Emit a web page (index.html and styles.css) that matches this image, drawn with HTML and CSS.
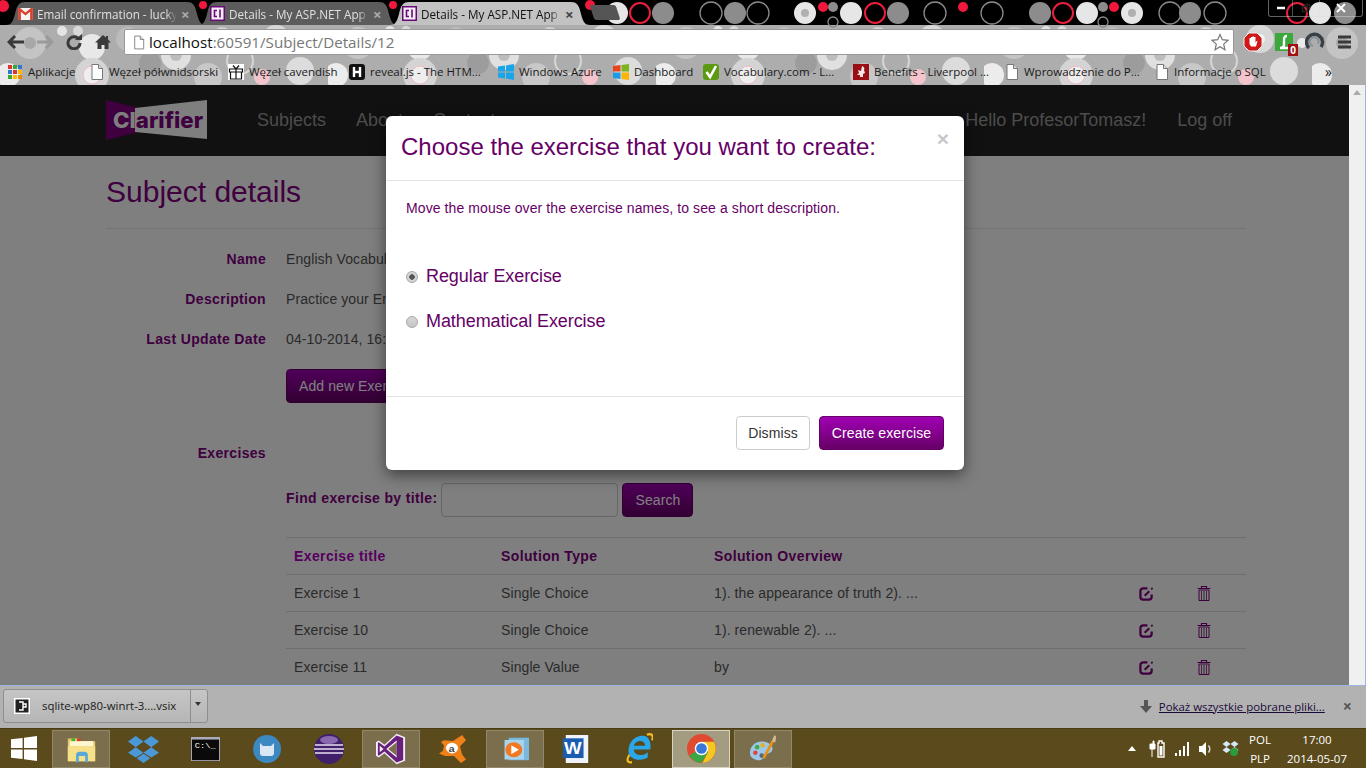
FILE: index.html
```html
<!DOCTYPE html>
<html lang="pl">
<head>
    <meta charset="UTF-8">
    <meta name="viewport" content="width=device-width, initial-scale=1.0">
    <title>Details - My ASP.NET Application</title>
    <link rel="stylesheet" href="styles.css">
</head>
<body>
    <!-- Shared icons -->
    <svg class="icon-defs" width="0" height="0">
        <symbol id="doc" viewBox="0 0 14 16">
            <path d="M2 .5h6.5L12.5 4.500v11h-10.500z" fill="#fff" stroke="#777"/>
            <path d="M8.500 .5v4h4" fill="#ddd" stroke="#777"/>
        </symbol>
        <symbol id="edit" viewBox="0 0 16 16">
            <path d="M9 2.500H4.500A3 3 0 0 0 1.500 5.500v6a3 3 0 0 0 3 3h6a3 3 0 0 0 3-3V9" fill="none" stroke="#800080" stroke-width="2.400"/>
            <path d="M6 10.500 11 5.500" stroke="#800080" stroke-width="2.200"/>
            <path d="M13 3.500l1.500-1.500" stroke="#800080" stroke-width="1.800"/>
        </symbol>
        <symbol id="trash" viewBox="0 0 14 16">
            <path d="M.5 3.500h13M4.500 3V1.500h5V3" fill="none" stroke="#800080" stroke-width="1.200"/>
            <path d="M2 5h10v10.500H2z" fill="none" stroke="#800080"/>
            <path d="M4.500 6v9M9.500 6v9" stroke="#a04070"/>
            <path d="M7 6v9" stroke="#6040a0"/>
        </symbol>
        <symbol id="gmail" viewBox="0 0 16 13">
            <path d="M0 0h16v13H0z" fill="#f4f4f4"/>
            <path d="M0 0v13h3V4l5 4 5-4v9h3V0h-2L8 5 2 0z" fill="#d9412f"/>
        </symbol>
        <symbol id="clarifier" viewBox="0 0 15 15">
            <path d="M0 0h15v15H0z" fill="#6a0a7a"/>
            <path d="M1.500 1.500h12v12h-12z" fill="#f2eef4"/>
            <path d="M7 4.500H4.500v6H7M10 3.500v8" fill="none" stroke="#6a0a7a" stroke-width="1.600"/>
        </symbol>
    </svg>

    <!-- Browser chrome -->
    <header class="browser-top">
        <svg class="theme" width="1366" height="85" aria-hidden="true">
            <defs>
                <pattern id="dots" x="0" y="25" width="328" height="60" patternUnits="userSpaceOnUse">
                    <circle cx="30" cy="18" r="16" fill="#c4c4c4"/>
                    <circle cx="30" cy="18" r="6" fill="#a8a8a8"/>
                    <circle cx="62" cy="6" r="5" fill="#e4e4e4"/>
                    <circle cx="78" cy="6" r="5" fill="#d8d8d8"/>
                    <circle cx="92" cy="22" r="13" fill="#e8e8e8"/>
                    <circle cx="92" cy="50" r="17" fill="#d4d4d4"/>
                    <circle cx="92" cy="50" r="9" fill="#eee" stroke="#f0b8c0"/>
                    <circle cx="128" cy="14" r="12" fill="#bcbcbc"/>
                    <circle cx="150" cy="38" r="11" fill="#9c9c9c"/>
                    <circle cx="150" cy="10" r="4" fill="#f2f2f2"/>
                    <circle cx="176" cy="30" r="15" fill="#e0e0e0"/>
                    <circle cx="176" cy="30" r="6" fill="#bdbdbd"/>
                    <circle cx="208" cy="52" r="14" fill="#c8c8c8"/>
                    <circle cx="222" cy="12" r="10" fill="#d2d2d2"/>
                    <circle cx="240" cy="36" r="13" fill="none" stroke="#d6d6d6" stroke-width="2"/>
                    <circle cx="262" cy="52" r="8" fill="#f4c4cc"/>
                    <circle cx="276" cy="14" r="14" fill="#d8d8d8"/>
                    <circle cx="276" cy="14" r="5" fill="#f2f2f2"/>
                    <circle cx="300" cy="46" r="14" fill="#dcdcdc"/>
                    <circle cx="318" cy="18" r="5" fill="#eaeaea"/>
                    <circle cx="8" cy="50" r="12" fill="#ececec"/>
                </pattern>
            </defs>
            <rect width="1366" height="25" fill="#000"/>
            <rect y="25" width="1366" height="60" fill="#adadad"/>
            <rect y="25" width="1366" height="60" fill="url(#dots)"/>
            <g fill="none" stroke="#8a8a8a" stroke-width="1.300">
                <circle cx="711" cy="13" r="11"/><circle cx="758" cy="13" r="11"/>
                <circle cx="833" cy="22" r="5"/><circle cx="935" cy="13" r="11"/>
                <circle cx="992" cy="13" r="11"/><circle cx="1103" cy="22" r="5"/>
                <circle cx="1170" cy="13" r="11"/><circle cx="1215" cy="13" r="11"/>
            </g>
            <g fill="#8c8c8c">
                <circle cx="663" cy="13" r="11"/><circle cx="735" cy="13" r="11"/>
                <circle cx="833" cy="7" r="5"/><circle cx="898" cy="13" r="11"/>
                <circle cx="1040" cy="13" r="11"/><circle cx="1103" cy="7" r="5"/>
                <circle cx="1190" cy="13" r="11"/><circle cx="1345" cy="13" r="11"/>
            </g>
            <g fill="#e6e6e6">
                <circle cx="617" cy="13" r="11"/><circle cx="805" cy="13" r="11"/>
                <circle cx="851" cy="13" r="11"/><circle cx="1087" cy="13" r="11"/>
                <circle cx="1132" cy="13" r="11"/><circle cx="1320" cy="13" r="11"/>
            </g>
            <g fill="#b0b0b0"><circle cx="805" cy="13" r="4"/><circle cx="1132" cy="13" r="4"/></g>
            <g fill="none" stroke="#e8203c" stroke-width="2">
                <circle cx="640" cy="13" r="10"/><circle cx="875" cy="13" r="10"/>
                <circle cx="1063" cy="13" r="10"/><circle cx="1297" cy="13" r="10"/>
            </g>
            <g fill="#f0183c">
                <circle cx="823" cy="7" r="5"/><circle cx="963" cy="7" r="5"/>
                <circle cx="1114" cy="7" r="5"/><circle cx="3" cy="6" r="6"/>
                <circle cx="203" cy="5" r="4"/><circle cx="393" cy="5" r="4"/>
                <circle cx="590" cy="5" r="5"/>
            </g>
        </svg>

        <div class="tabstrip">
            <div class="tab">
                <svg class="tab-icon" width="15" height="12"><use href="#gmail"/></svg>
                <span class="tab-title">Email confirmation - lucky</span>
                <span class="tab-close">×</span>
            </div>
            <div class="tab">
                <svg class="tab-icon" width="15" height="15"><use href="#clarifier"/></svg>
                <span class="tab-title">Details - My ASP.NET App</span>
                <span class="tab-close">×</span>
            </div>
            <div class="tab active">
                <svg class="tab-icon" width="15" height="15"><use href="#clarifier"/></svg>
                <span class="tab-title">Details - My ASP.NET App</span>
                <span class="tab-close">×</span>
            </div>
            <div class="new-tab"></div>
            <div class="window-btns">
                <span class="win-btn win-min"><svg width="10" height="8"><path d="M1 4h8" stroke="#fff" stroke-width="2.500"/></svg></span>
                <span class="win-btn win-max"><svg width="10" height="10"><path d="M1.500 3.500h5v5h-5zM3.500 1.500h5v5" fill="none" stroke="#222" stroke-width="1.400"/></svg></span>
                <span class="win-btn win-close"><svg width="12" height="10"><path d="M2 1l8 8M10 1l-8 8" stroke="#fff" stroke-width="2"/></svg></span>
            </div>
        </div>

        <div class="toolbar">
            <svg class="tool" width="18" height="16"><path d="M8 2 2 8l6 6M2.500 8H17" fill="none" stroke="#3a3a3a" stroke-width="3"/></svg>
            <svg class="tool" width="18" height="16"><path d="M10 2l6 6-6 6M15.500 8H1" fill="none" stroke="#9a9a9a" stroke-width="3"/></svg>
            <svg class="tool" width="18" height="16"><path d="M14 5.500A6 6 0 1 0 15 9" fill="none" stroke="#3a3a3a" stroke-width="3"/><path d="M10 6h7V0z" fill="#3a3a3a"/></svg>
            <svg class="tool" width="18" height="16"><path d="M9 1 1 8.500h2.500V15h4v-4h3v4h4V8.500H17L14 5.500V2h-2v1.500z" fill="#3a3a3a"/></svg>
            <div class="omnibox">
                <svg width="12" height="15"><use href="#doc"/></svg>
                <span class="url"><span class="url-host">localhost</span>:60591/Subject/Details/12</span>
                <svg class="star" width="18" height="18" viewBox="0 0 18 18"><path d="M9 1.500l2.300 5.200 5.700.6-4.300 3.800 1.200 5.600L9 13.800l-4.900 2.900 1.200-5.600L1 7.300l5.700-.6z" fill="#fff" stroke="#777" stroke-width="1.200"/></svg>
            </div>
            <div class="extensions">
                <svg width="20" height="20" viewBox="0 0 20 20"><path d="M6 1h8l5 5v8l-5 5H6l-5-5V6z" fill="#d01818" stroke="#eee"/><path d="M6.500 9V6h1.500v3-4h1.500v4-4.500H11V9 5h1.500v6l1-2h1l-1.500 5.500H8L6.500 12z" fill="#fff"/></svg>
                <span class="ext-green">
                    <svg width="18" height="19" viewBox="0 0 18 19"><path d="M0 0h18v18H0z" fill="#3aa83a"/><path d="M12 3C9 3 9 5 9 8v4c0 2-2 3-4 3h9" fill="none" stroke="#fff" stroke-width="2.400"/></svg>
                    <span class="ext-badge">0</span>
                </span>
                <svg width="20" height="20" viewBox="0 0 20 20"><path d="M4 16A8 8 0 1 1 16 15" fill="none" stroke="#3a4048" stroke-width="3.500"/><path d="M8 14A4.500 4.500 0 1 1 13 12" fill="none" stroke="#8a9098" stroke-width="2"/></svg>
                <svg width="15" height="14"><path d="M1 2h13M1 7h13M1 12h13" stroke="#3a3a3a" stroke-width="3"/></svg>
            </div>
        </div>

        <nav class="bookmarks">
            <a class="bookmark bookmark-apps">
                <svg width="14" height="14" viewBox="0 0 14 14">
                    <path d="M0 0h4v4H0z" fill="#d33"/><path d="M5 0h4v4H5z" fill="#3a3"/><path d="M10 0h4v4h-4z" fill="#37c"/>
                    <path d="M0 5h4v4H0z" fill="#37c"/><path d="M5 5h4v4H5z" fill="#d33"/><path d="M10 5h4v4h-4z" fill="#fb0"/>
                    <path d="M0 10h4v4H0z" fill="#3a3"/><path d="M5 10h4v4H5z" fill="#fb0"/><path d="M10 10h4v4h-4z" fill="#e80"/>
                </svg>
                Aplikacje
            </a>
            <a class="bookmark"><svg width="14" height="16"><use href="#doc"/></svg>Węzeł półwnidsorski</a>
            <a class="bookmark">
                <svg width="16" height="16" viewBox="0 0 16 16"><path d="M0 0h16v16H0z" fill="#fff"/><path d="M1.500 5h13v3h-13zM2.500 8h11v7h-11zM8 5v10M5 1.500 8 5l3-3.500" fill="none" stroke="#111" stroke-width="1.200"/></svg>
                Węzeł cavendish
            </a>
            <a class="bookmark">
                <svg width="16" height="16" viewBox="0 0 16 16"><rect width="16" height="16" rx="3" fill="#111"/><path d="M5 3v10M11 3v10M5 8h6" stroke="#fff" stroke-width="2.400"/></svg>
                reveal.js - The HTM...
            </a>
            <a class="bookmark">
                <svg width="16" height="16" viewBox="0 0 16 16"><path d="M0 2.500 7 1.500V7.500H0zM8 1.400 16 0V7.500H8zM0 8.500H7V14.500L0 13.500zM8 8.500H16V16L8 14.600z" fill="#19a6e8"/></svg>
                Windows Azure
            </a>
            <a class="bookmark">
                <svg width="16" height="16" viewBox="0 0 16 16"><path d="M0 2 7.500 1v6.500H0z" fill="#e8431c"/><path d="M8.500 1 16 0v7.500H8.500z" fill="#7ab51d"/><path d="M0 8.500h7.500V15L0 14z" fill="#1c9ae8"/><path d="M8.500 8.500H16V16l-7.500-1z" fill="#fbb400"/></svg>
                Dashboard
            </a>
            <a class="bookmark">
                <svg width="16" height="16" viewBox="0 0 16 16"><rect width="16" height="16" rx="3" fill="#5c9a14"/><path d="M3.500 8 7 13l6-11" fill="none" stroke="#fff" stroke-width="2.600"/></svg>
                Vocabulary.com - L...
            </a>
            <a class="bookmark">
                <svg width="16" height="16" viewBox="0 0 16 16"><path d="M0 0h16v16H0z" fill="#9a0f14"/><path d="M9 2c2 1 3 2 2 4l1 3-2 1v3H7v-2H4l2-2-1-3 3 1z" fill="#f2e6e6"/></svg>
                Benefits - Liverpool ...
            </a>
            <a class="bookmark"><svg width="14" height="16"><use href="#doc"/></svg>Wprowadzenie do P...</a>
            <a class="bookmark"><svg width="14" height="16"><use href="#doc"/></svg>Informacje o SQL</a>
            <span class="bookmark-more">»</span>
        </nav>
    </header>

    <!-- Page in the browser window -->
    <div class="viewport">
        <div class="page">
            <div class="navbar">
                <a class="logo">
                    <svg width="101" height="40" viewBox="0 0 101 40">
                        <path d="M0 0 29 7V33L0 40z" fill="#800080"/>
                        <path d="M29 8 101 0V39L29 32z" fill="#fff"/>
                        <text x="7" y="28" class="logo-text" textLength="90" lengthAdjust="spacingAndGlyphs"><tspan fill="#fff">Cl</tspan><tspan fill="#800080">arifier</tspan></text>
                    </svg>
                </a>
                <ul class="nav-links">
                    <li>Subjects</li>
                    <li>About</li>
                    <li>Contact</li>
                </ul>
                <ul class="nav-links nav-right">
                    <li>Hello ProfesorTomasz!</li>
                    <li>Log off</li>
                </ul>
            </div>

            <div class="content">
                <h2>Subject details</h2>
                <hr>

                <div class="details">
                    <div class="label">Name</div>
                    <div class="value">English Vocabulary</div>
                    <div class="label">Description</div>
                    <div class="value">Practice your English vocabulary</div>
                    <div class="label">Last Update Date</div>
                    <div class="value">04-10-2014, 16:25</div>
                    <div></div>
                    <div><button class="btn btn-purple">Add new Exercise</button></div>
                    <div class="label label-exercises">Exercises</div>
                    <div></div>
                </div>

                <div class="exercises">
                    <form class="search-form">
                        <label>Find exercise by title:</label>
                        <input type="text" class="search-input">
                        <button type="button" class="btn btn-purple">Search</button>
                    </form>

                    <table class="exercise-table">
                        <colgroup>
                            <col class="col-title"><col class="col-type"><col class="col-overview"><col class="col-edit"><col class="col-delete">
                        </colgroup>
                        <thead>
                            <tr>
                                <th class="sorted">Exercise title</th>
                                <th>Solution Type</th>
                                <th>Solution Overview</th>
                                <th></th>
                                <th></th>
                            </tr>
                        </thead>
                        <tbody>
                            <tr>
                                <td>Exercise 1</td>
                                <td>Single Choice</td>
                                <td>1). the appearance of truth 2). ...</td>
                                <td><svg class="row-icon" width="15" height="15"><use href="#edit"/></svg></td>
                                <td><svg class="row-icon" width="14" height="16"><use href="#trash"/></svg></td>
                            </tr>
                            <tr>
                                <td>Exercise 10</td>
                                <td>Single Choice</td>
                                <td>1). renewable 2). ...</td>
                                <td><svg class="row-icon" width="15" height="15"><use href="#edit"/></svg></td>
                                <td><svg class="row-icon" width="14" height="16"><use href="#trash"/></svg></td>
                            </tr>
                            <tr>
                                <td>Exercise 11</td>
                                <td>Single Value</td>
                                <td>by</td>
                                <td><svg class="row-icon" width="15" height="15"><use href="#edit"/></svg></td>
                                <td><svg class="row-icon" width="14" height="16"><use href="#trash"/></svg></td>
                            </tr>
                        </tbody>
                    </table>
                </div>
            </div>

            <div class="backdrop"></div>

            <!-- Modal -->
            <div class="modal">
                <div class="modal-header">
                    <h4>Choose the exercise that you want to create:</h4>
                    <span class="modal-close">×</span>
                </div>
                <div class="modal-body">
                    <p>Move the mouse over the exercise names, to see a short description.</p>
                    <label class="choice"><input type="radio" name="kind" checked>Regular Exercise</label>
                    <label class="choice"><input type="radio" name="kind">Mathematical Exercise</label>
                </div>
                <div class="modal-footer">
                    <button class="btn btn-default">Dismiss</button>
                    <button class="btn btn-primary">Create exercise</button>
                </div>
            </div>
        </div>
        <div class="scrollbar"><span class="scroll-up"></span></div>
    </div>

    <!-- Download shelf -->
    <div class="download-bar">
        <div class="download-item">
            <svg width="16" height="16" viewBox="0 0 16 16"><path d="M0 0h16v16H0z" fill="#fff"/><path d="M1.500 1.500h13v13h-13z" fill="#222"/><path d="M5 4h4v8H5M9 6h3v3H9" fill="none" stroke="#fff" stroke-width="1.400"/></svg>
            <span class="download-name">sqlite-wp80-winrt-3....vsix</span>
            <span class="download-arrow"></span>
        </div>
        <div class="download-right">
            <svg width="12" height="13" viewBox="0 0 12 13"><path d="M4 0h4v6h4l-6 7-6-7h4z" fill="#555"/></svg>
            <a class="show-all">Pokaż wszystkie pobrane pliki...</a>
            <span class="download-close">×</span>
        </div>
    </div>

    <!-- Windows taskbar -->
    <footer class="taskbar">
        <svg class="start" width="26" height="25" viewBox="0 0 28 26" preserveAspectRatio="none"><path d="M0 3.500 12.500 2v10.500H0zM14 1.800 28 0v12.500H14zM0 14h12.500v10L0 22.500zM14 14h14v12l-14-1.800z" fill="#fff"/></svg>
        <div class="task pinned open">
            <svg width="31" height="28" viewBox="0 0 34 32" preserveAspectRatio="none"><path d="M2 4h12l2 3h16v23H2z" fill="#e8c860"/><path d="M4 7h26v6H4z" fill="#fff6d0"/><path d="M6 4h4v3H6z" fill="#3b3"/><path d="M12 4h4v3h-4z" fill="#d33"/><path d="M2 13h30v17H2z" fill="#f6e08a"/><path d="M11 31v-8a4 4 0 0 1 4-4h5a4 4 0 0 1 4 4v8h-3v-7h-7v7z" fill="#58a8d8"/></svg>
        </div>
        <div class="task">
            <svg width="31" height="28" viewBox="0 0 32 30" preserveAspectRatio="none"><path d="M8 1 16 7 8 13 0 7zM24 1l8 6-8 6-8-6zM8 13l8 6-8 5-8-5zM24 13l8 6-8 5-8-5zM16 20l7 5-7 5-7-5z" fill="#4a98d8"/></svg>
        </div>
        <div class="task">
            <svg width="29" height="24" viewBox="0 0 30 28" preserveAspectRatio="none"><path d="M0 0h30v28H0z" fill="#aab"/><path d="M1 3h28v24H1z" fill="#0a0a0a"/><text x="4" y="13" class="cmd-text">C:\_</text></svg>
        </div>
        <div class="task">
            <svg width="28" height="28" viewBox="0 0 28 28"><circle cx="14" cy="14" r="14" fill="#3c88c0"/><path d="M7 8l3 3h8l3-3v10a3 3 0 0 1-3 3H10a3 3 0 0 1-3-3z" fill="#dbe8f4"/></svg>
        </div>
        <div class="task">
            <svg width="30" height="30" viewBox="0 0 30 30"><circle cx="15" cy="15" r="15" fill="#40206a"/><path d="M1 11h28M0 15h30M1 19h28" stroke="#e8e0f0" stroke-width="1.600"/><ellipse cx="15" cy="6" rx="9" ry="4" fill="#8a68b0"/></svg>
        </div>
        <div class="task pinned">
            <svg width="30" height="32" viewBox="0 0 32 38" preserveAspectRatio="none"><path d="M22 1 31 5V33L22 37 9 24 3 29 0 27V11L3 9 9 14zM22 11 13 19 22 27z" fill="#f4f0f8"/><path d="M22 3 29 6V32L22 35 9 22 3 27 2 26V12L3 11 9 16zM22 9 11 19 22 29zM4 15v8l4-4z" fill="#68217a"/></svg>
        </div>
        <div class="task">
            <svg width="30" height="30" viewBox="0 0 30 34" preserveAspectRatio="none"><path d="M15 8 24 1l4 6-6 7 2 9 4 6-5 4-7-8H7L1 22l4-3 1-6-3-4 3-2z" fill="#f08018"/><circle cx="14" cy="16" r="6" fill="#fff"/><text x="10.500" y="20" class="avast-text">a</text></svg>
        </div>
        <div class="task pinned">
            <svg width="27" height="24" viewBox="0 0 32 32" preserveAspectRatio="none"><path d="M8 1h24v30H8z" fill="#7ab8dc"/><path d="M3 4h23v26H3z" fill="#a8d4ec"/><circle cx="14" cy="17" r="10" fill="#f07820"/><path d="M11 11v12l9-6z" fill="#fff"/></svg>
        </div>
        <div class="task">
            <svg width="28" height="28" viewBox="0 0 30 34" preserveAspectRatio="none"><path d="M3 0h24v34H3z" fill="#f0f4fa"/><path d="M0 4h22v24H0z" fill="#1a5cb0"/><text x="1" y="23" class="word-text">W</text></svg>
        </div>
        <div class="task">
            <svg width="28" height="31" viewBox="0 0 32 34" preserveAspectRatio="none"><path d="M4 20C4 9 12 3 20 3c8 0 10 8 9 15H10c1 7 10 8 16 3v6c-9 5-22 2-22-7zM10 14h13c0-7-11-7-13 0z" fill="#29a7e8"/><path d="M5 24C1 30 3 33 8 32M25 2c5-2 8 0 6 6" fill="none" stroke="#f4c020" stroke-width="2.400"/></svg>
        </div>
        <div class="task pinned active">
            <svg width="29" height="29" viewBox="0 0 30 30"><circle cx="15" cy="15" r="15" fill="#e04a30"/><path d="M15 15 2.500 22A15 15 0 0 0 15 30l7-12z" fill="#3ca644"/><path d="M15 8h13a15 15 0 0 1-12 22l6-12z" fill="#f4c820"/><circle cx="15" cy="15" r="7" fill="#fff"/><circle cx="15" cy="15" r="5.500" fill="#3a78d8"/></svg>
        </div>
        <div class="task pinned">
            <svg width="29" height="30" viewBox="0 0 32 32" preserveAspectRatio="none"><path d="M14 8C6 8 1 14 1 20c0 6 6 8 10 8 5 0 4-4 6-6s8 0 9-6c0-5-6-8-12-8z" fill="#9cc8e8"/><circle cx="9" cy="14" r="2.500" fill="#4a4"/><circle cx="15" cy="12" r="2.500" fill="#e8b020"/><circle cx="7" cy="20" r="2.500" fill="#d44"/><circle cx="14" cy="23" r="2.500" fill="#567"/><path d="M16 26 26 8" stroke="#e89018" stroke-width="3"/><path d="M25 8l3-7 2 2-1 6z" fill="#d8b890"/></svg>
        </div>

        <div class="tray">
            <span class="tray-up"></span>
            <svg width="17" height="18" viewBox="0 0 17 18"><path d="M1 4h3V1h1v3h1v5H1zM3 9v8" stroke="#fff" fill="#fff"/><path d="M9 3h1V1h3v2h2v14H9z" fill="none" stroke="#fff" stroke-width="1.400"/><path d="M10.500 6h3v9.500h-3z" fill="#fff"/></svg>
            <svg width="15" height="14" viewBox="0 0 15 14"><path d="M0 11h2v3H0zM4 8h2v6H4zM8 4h2v10H8zM12 0h2v14h-2z" fill="#fff"/></svg>
            <svg width="14" height="16" viewBox="0 0 14 16"><path d="M0 5h3l4-4v14l-4-4H0z" fill="#fff"/><path d="M9.500 4.500c1.500 2 1.500 5 0 7" fill="none" stroke="#ddd" stroke-width="1.400"/></svg>
            <svg width="17" height="17" viewBox="0 0 17 17"><path d="M4.500 1l4 3-4 3-4-3zM12.500 1l4 3-4 3-4-3zM4.500 7l4 3-4 3-4-3zM12.500 7l4 3-4 3-4-3z" fill="#d4e8f8"/><circle cx="12" cy="12" r="4" fill="#2a9a3a"/></svg>
            <div class="tray-lang"><span>POL</span><span>PLP</span></div>
            <div class="tray-clock"><span>17:00</span><span>2014-05-07</span></div>
        </div>
    </footer>
</body>
</html>
```

FILE: styles.css
```css
/* Basic page */
html, body {
    margin: 0;
    padding: 0;
    height: 768px;
    overflow: hidden;
}
body {
    width: 1366px;
    display: flex;
    flex-direction: column;
    font-family: "Liberation Sans", Arial, sans-serif;
    font-size: 14px;
    color: #555;
    background: #fff;
}
.icon-defs {
    position: absolute;
}

/* Browser chrome */
.browser-top {
    position: relative;
    height: 85px;
    flex: none;
    font-family: "Open Sans", sans-serif;
    overflow: hidden;
}
.theme {
    position: absolute;
    left: 0;
    top: 0;
}
.tabstrip {
    position: relative;
    display: flex;
    height: 25px;
    padding: 2px 0 0 6px;
    box-sizing: border-box;
}
.tab {
    width: 200px;
    height: 23px;
    margin-right: -8px;
    display: flex;
    align-items: center;
    box-sizing: border-box;
    padding-left: 12px;
    background: #5c5c5c;
    color: #e0e0e0;
    font-size: 11.700px;
    clip-path: path("M0 23 C5 23 7 20 9 12 C11 3 13 0 19 0 H181 C187 0 189 3 191 12 C193 20 195 23 200 23 Z");
}
.tab.active {
    position: relative;
    background: #c2c2c2;
    color: #111;
}
.tab-icon {
    flex: none;
    margin-right: 4px;
}
.tab-title {
    width: 140px;
    flex: none;
    white-space: nowrap;
    overflow: hidden;
    -webkit-mask-image: linear-gradient(to right, #000 92%, transparent);
    mask-image: linear-gradient(to right, #000 92%, transparent);
}
.tab-close {
    margin-left: 4px;
    color: #aaa;
    font-size: 15px;
    font-weight: 700;
}
.tab.active .tab-close {
    color: #444;
}
.new-tab {
    width: 26px;
    height: 15px;
    margin: 3px 0 0 10px;
    background: #555;
    transform: skewX(18deg);
    border-radius: 2px;
}
.window-btns {
    position: absolute;
    right: 3px;
    top: 0;
    display: flex;
    height: 16px;
    border: 1px solid rgba(220, 220, 220, .45);
    border-top: 0;
    border-radius: 0 0 3px 3px;
}
.win-btn {
    display: flex;
    align-items: center;
    justify-content: center;
    border-right: 1px solid rgba(220, 220, 220, .35);
}
.win-min { width: 23px; }
.win-max { width: 26px; }
.win-close { width: 42px; border-right: 0; }
.toolbar {
    position: relative;
    display: flex;
    align-items: center;
    height: 33px;
    padding: 1px 0 0 7px;
    box-sizing: border-box;
}
.tool {
    width: 18px;
    margin-right: 11px;
    flex: none;
}
.omnibox {
    display: flex;
    align-items: center;
    width: 1110px;
    height: 26px;
    margin-left: 1px;
    padding: 0 4px 0 8px;
    box-sizing: border-box;
    background: #fff;
    border: 1px solid #999;
    border-radius: 2px;
}
.url {
    margin-left: 4px;
    font-size: 15.200px;
    color: #777;
    white-space: nowrap;
}
.url-host {
    color: #111;
}
.star {
    margin-left: auto;
}
.extensions {
    display: flex;
    align-items: center;
    gap: 12px;
    margin-left: 9px;
}
.ext-green {
    position: relative;
    display: block;
    height: 19px;
}
.ext-badge {
    position: absolute;
    right: -5px;
    bottom: -4px;
    padding: 0 2px;
    background: #a01010;
    color: #fff;
    font-size: 10px;
    font-weight: 700;
    line-height: 12px;
}
.bookmarks {
    position: relative;
    display: grid;
    grid-template-columns: 82px 138px 121px 149px 115px 90px 150px 152px 150px 170px auto;
    align-items: center;
    height: 27px;
    padding-left: 8px;
    box-sizing: border-box;
    font-size: 11.500px;
    color: #1a1a1a;
}
.bookmark {
    display: flex;
    align-items: center;
    gap: 5px;
    white-space: nowrap;
}
.bookmark-apps {
    gap: 6px;
}
.bookmark-more {
    font-size: 14px;
}

/* Page in the browser window */
.viewport {
    display: flex;
    height: 601px;
    flex: none;
    border-bottom: 1px solid #9cb4e0;
    box-sizing: border-box;
}
.page {
    position: relative;
    width: 1349px;
    overflow: hidden;
    background: #fff;
}
.scrollbar {
    width: 16px;
    background: #f0f0f0;
    border-right: 1px solid #9cb4e0;
    position: relative;
}
.scroll-up {
    position: absolute;
    left: 4px;
    top: 5px;
    border: 4px solid transparent;
    border-top: 0;
    border-bottom: 5px solid #aaa;
}
.backdrop {
    position: absolute;
    left: 0;
    top: 0;
    right: 0;
    bottom: 0;
    background: rgba(0, 0, 0, .5);
}

/* Navbar */
.navbar {
    display: flex;
    align-items: center;
    height: 71px;
    padding: 0 117px 0 106px;
    box-sizing: border-box;
    background: #222;
}
.logo {
    display: block;
    height: 40px;
    margin: -2px 50px 0 0;
}
.logo-text {
    font-family: Inter, sans-serif;
    font-size: 22px;
    font-weight: 800;
}
.nav-links {
    display: flex;
    gap: 30px;
    margin: 0;
    padding: 0;
    list-style: none;
    font-size: 18px;
    color: #999;
}
.nav-right {
    margin-left: auto;
    gap: 31px;
}

/* Subject details */
.content {
    padding: 19px 103px 0 106px;
}
h2 {
    margin: 0;
    font-size: 30px;
    font-weight: 400;
    line-height: 33px;
    color: #800080;
}
hr {
    margin: 20px 0;
    border: 0;
    border-top: 1px solid #e8e8e8;
}
.details {
    display: grid;
    grid-template-columns: 160px 1fr;
    column-gap: 20px;
    row-gap: 20px;
    line-height: 20px;
}
.label {
    font-weight: 700;
    letter-spacing: .33px;
    text-align: right;
    color: #800080;
}
.value {
    letter-spacing: .09px;
}
.label-exercises {
    margin-top: 20px;
}
.btn {
    display: inline-block;
    height: 34px;
    padding: 0 12px;
    font-family: inherit;
    font-size: 14px;
    letter-spacing: .09px;
    border-radius: 4px;
    box-sizing: border-box;
    border: 1px solid transparent;
}
.btn-purple, .btn-primary {
    color: #fff;
    border-color: #660066;
    background: linear-gradient(#a000b4, #660066);
}
.btn-primary {
    width: 125px;
    padding: 0;
}
.btn-default {
    width: 74px;
    padding: 0;
    color: #333;
    background: #fff;
    border-color: #ccc;
}
.exercises {
    margin: 20px 0 0 180px;
}
.search-form {
    display: flex;
    align-items: center;
    height: 34px;
}
.search-form label {
    margin: -4px 4px 0 0;
    font-weight: 700;
    letter-spacing: .36px;
    color: #800080;
}
.search-input {
    width: 177px;
    height: 34px;
    margin-right: 4px;
    padding: 6px 12px;
    box-sizing: border-box;
    background: #fff;
    border: 1px solid #ccc;
    border-radius: 4px;
}
.exercise-table {
    width: 960px;
    margin-top: 20px;
    border-collapse: collapse;
    table-layout: fixed;
}
.col-title { width: 207px; }
.col-type { width: 213px; }
.col-overview { width: 425px; }
.col-edit { width: 58px; }
.col-delete { width: 57px; }
.exercise-table th, .exercise-table td {
    height: 37px;
    padding: 0 8px;
    box-sizing: border-box;
    text-align: left;
    letter-spacing: .09px;
    border-top: 1px solid #ddd;
}
.exercise-table th {
    color: #800080;
    letter-spacing: .38px;
}
.exercise-table th.sorted {
    color: #b000c0;
}
.row-icon {
    display: block;
}

/* Modal */
.modal {
    position: absolute;
    left: 386px;
    top: 31px;
    width: 578px;
    height: 354px;
    display: flex;
    flex-direction: column;
    background: #fff;
    border-radius: 6px;
    box-shadow: 0 5px 15px rgba(0, 0, 0, .5);
    color: #660066;
}
.modal-header {
    position: relative;
    height: 65px;
    padding: 0 15px 2px;
    box-sizing: border-box;
    display: flex;
    align-items: center;
    border-bottom: 1px solid #e5e5e5;
}
.modal-header h4 {
    margin: 0;
    font-size: 24px;
    font-weight: 400;
}
.modal-close {
    position: absolute;
    right: 15px;
    top: 10px;
    font-size: 21px;
    font-weight: 700;
    line-height: 25px;
    color: #c8c8c8;
}
.modal-body {
    height: 215px;
    padding: 20px;
    box-sizing: border-box;
}
.modal-body p {
    margin: 0 0 51px;
    line-height: 14px;
    letter-spacing: .09px;
}
.choice {
    display: flex;
    align-items: center;
    height: 21px;
    margin-bottom: 24px;
    font-size: 18px;
    letter-spacing: -.08px;
}
.choice input {
    appearance: none;
    -webkit-appearance: none;
    width: 12px;
    height: 12px;
    margin: 0 8px 0 0;
    box-sizing: border-box;
    border: 1px solid #a8a8a8;
    border-radius: 50%;
    background: linear-gradient(#d8d8d8, #c4c4c4);
}
.choice input:checked {
    background: radial-gradient(circle, #555 0, #555 2.500px, #d4d4d4 3px);
}
.modal-footer {
    display: flex;
    justify-content: flex-end;
    gap: 9px;
    padding: 19px 20px 0;
    border-top: 1px solid #e5e5e5;
    height: 74px;
    box-sizing: border-box;
}

/* Download shelf */
.download-bar {
    display: flex;
    align-items: center;
    justify-content: space-between;
    height: 42px;
    flex: none;
    background: #b2b2b2;
    color: #1a1a1a;
    font-family: "Open Sans", sans-serif;
    font-size: 11.400px;
}
.download-item {
    display: flex;
    align-items: center;
    width: 205px;
    height: 34px;
    margin: -3px 0 0 3px;
    padding-left: 10px;
    box-sizing: border-box;
    background: linear-gradient(#c6c6c6, #b6b6b6);
    border: 1px solid #8e8e8e;
    border-radius: 3px;
}
.download-name {
    margin-left: 12px;
    width: 148px;
    white-space: nowrap;
}
.download-arrow {
    position: relative;
    height: 100%;
    flex: 1;
    border-left: 1px solid #8e8e8e;
}
.download-arrow::after {
    content: "";
    position: absolute;
    left: 4px;
    top: 12px;
    border: 3px solid transparent;
    border-top: 4px solid #333;
}
.download-right {
    display: flex;
    align-items: center;
    margin: -2px 14px 0 0;
}
.show-all {
    margin-left: 7px;
    text-decoration: underline;
    color: #1a0a3a;
}
.download-close {
    margin-left: 18px;
    font-size: 16px;
    font-weight: 700;
    color: #555;
}

/* Windows taskbar */
.taskbar {
    display: flex;
    align-items: center;
    gap: 4px;
    height: 40px;
    flex: none;
    padding-left: 11px;
    box-sizing: border-box;
    background: #5b4a1c;
    border-top: 1px solid #4a3c14;
    color: #fff;
    font-family: "Open Sans", sans-serif;
    font-size: 11.500px;
}
.start {
    margin-right: 11px;
    flex: none;
}
.task {
    width: 58px;
    height: 38px;
    flex: none;
    display: flex;
    align-items: center;
    justify-content: center;
    box-sizing: border-box;
    border: 1px solid transparent;
}
.task.pinned {
    background: #7a6e4c;
    border-color: #91876a;
}
.task.active {
    background: #a39c80;
    border-color: #d8d4c4;
}
.cmd-text {
    font-family: "Liberation Mono", monospace;
    font-size: 9px;
    fill: #fff;
}
.avast-text {
    font-family: "Liberation Sans", sans-serif;
    font-size: 11px;
    font-weight: 700;
    fill: #444;
}
.word-text {
    font-family: "Liberation Sans", sans-serif;
    font-size: 20px;
    font-weight: 700;
    fill: #fff;
}
.tray {
    display: flex;
    align-items: center;
    gap: 9px;
    margin: 0 19px 0 auto;
}
.tray-up {
    border: 4px solid transparent;
    border-top: 0;
    border-bottom: 5px solid #fff;
    margin-right: 4px;
}
.tray-lang, .tray-clock {
    display: flex;
    flex-direction: column;
    line-height: 19px;
}
.tray-lang {
    margin-left: 1px;
    align-items: center;
}
.tray-clock {
    margin-left: 7px;
    align-items: center;
}
```
